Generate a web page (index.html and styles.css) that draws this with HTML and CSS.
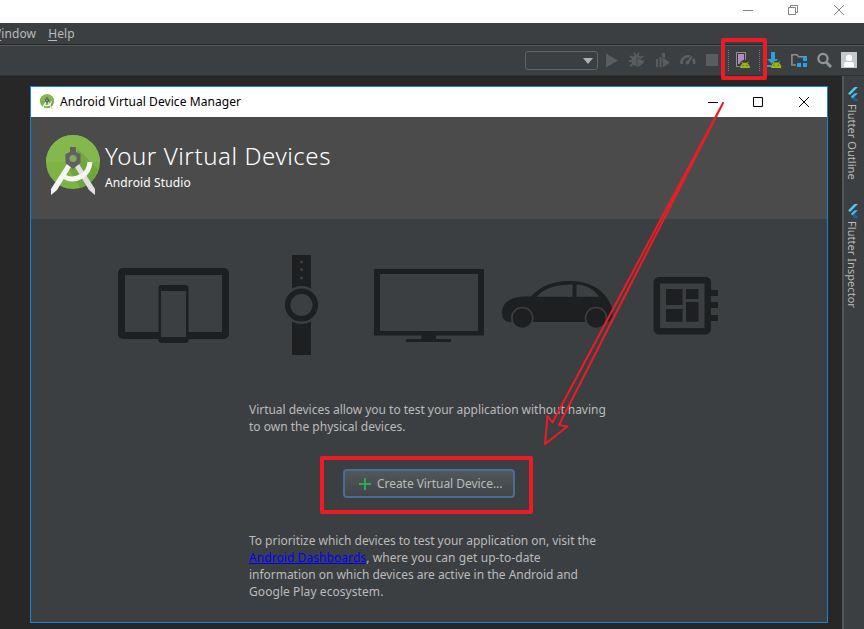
FILE: index.html
```html
<!DOCTYPE html>
<html lang="en">
<head>
<meta charset="utf-8">
<title>Android Virtual Device Manager</title>
<link rel="stylesheet" href="styles.css">
</head>
<body>
<svg class="defs" width="0" height="0">
  <symbol id="studio" viewBox="0 0 54 60">
    <circle cx="27" cy="27" r="27" fill="#7cb342"/>
    <path d="M0 27a27 27 0 0 1 54 0z" fill="#84b84e"/>
    <path d="M32 14L52 34A27 27 0 0 1 34 53L22 32z" fill="#689f38" opacity=".65"/>
    <path d="M21 29L25 32L11 55L5 60V54z" fill="#f5f5f5"/>
    <path d="M33 29L29 32L43 55L49 60V54z" fill="#e0e0e0"/>
    <path d="M17 41Q26 47 36 41Q43 37 44 27" fill="none" stroke="#f5f5f5" stroke-width="5"/>
    <path d="M24 12h6v5l4.500 2v9l-4 3l-3.500 3l-3.500-3l-4-3v-9l4.500-2z" fill="#616161"/>
    <circle cx="27" cy="23.500" r="3.600" fill="#84a95c"/>
  </symbol>
  <symbol id="droid" viewBox="0 0 10 7">
    <path d="M0 7C0 4.500 1 3 2.500 2L1.300 .5L1.900 0L3.300 1.600Q5 1 6.700 1.600L8.100 0L8.700 .5L7.500 2C9 3 10 4.500 10 7z" fill="#98b814"/>
    <path d="M2.500 3.500h1v1h-1zM6.500 3.500h1v1h-1z" fill="#3c3f41"/>
  </symbol>
  <symbol id="flutter" viewBox="0 0 12 14">
    <path d="M7.500 0H11L3 8L1 6.500z" fill="#4fc8f8"/>
    <path d="M7.500 6.200H11L7.300 9.800L11 13.500H7.500L3.800 9.800z" fill="#42b8ee"/>
    <path d="M5.500 11.600L7.300 9.800L11 13.500H7.500z" fill="#0a5a9d"/>
  </symbol>
</svg>

<div class="screen">
  <header class="titlebar">
    <svg class="caption" width="102" height="12" viewBox="0 0 102 12" fill="none" stroke="#858585">
      <path d="M0 6.500h10M45.500 3.500h7v7h-7zM47.500 3.500v-2h7v7h-2M91 1l10 10M101 1L91 11"/>
    </svg>
  </header>

  <nav class="menubar"><span class="m-window"><u>W</u>indow</span><span class="m-help"><u>H</u>elp</span></nav>

  <div class="toolbar">
    <div class="combo"><svg width="10" height="6" viewBox="0 0 10 6"><path d="M0 0h10L5 6z" fill="#afb1b3"/></svg></div>
    <svg viewBox="0 0 16 16"><path d="M2 1.500L14 8.500L2 15.500z" fill="#5a5c5d"/></svg>
    <svg viewBox="0 0 16 16" fill="#5a5c5d"><ellipse cx="7.500" cy="8.500" rx="4.800" ry="5.800"/><path d="M1 4l4 3M14 4l-4 3M0 9h5M1 14l4-3M5 1l2 3M10 1L8 4M11 9h4" stroke="#5a5c5d" stroke-width="1.800"/><path d="M8 5.500L16 10.500L8 16z" stroke="#3c3f41" stroke-width=".7"/></svg>
    <svg viewBox="0 0 16 16" fill="#5a5c5d"><path d="M1 7h2v8H1zM4.500 5h2v10h-2zM7 1h3v14H7z"/><path d="M7.500 5L15.500 10.500L7.500 16z" stroke="#3c3f41" stroke-width=".7"/></svg>
    <svg viewBox="0 0 16 16" fill="none" stroke="#5e6061" stroke-width="2.600"><path d="M1.500 12C1 6 6 3.300 10 4.500M13.300 7q1.300 2 .7 5"/><path d="M7 11.500L12 4.500" stroke-width="2"/><circle cx="7.500" cy="10.500" r=".6"/></svg>
    <svg viewBox="0 0 16 16"><path d="M2 2h12v12H2z" fill="#5a5c5d"/></svg>
    <i class="sep"></i>
    <svg viewBox="0 0 16 16"><path d="M1 0h10v15H1z" fill="#8f9193"/><path d="M2 1h8v13H2z" fill="#35383a"/><path d="M3 2h6v10H3z" fill="#b58bc7"/><path d="M4.500 16V12Q5 9 8 8h8v8z" fill="#3c3f41"/><use href="#droid" x="5" y="9.500" width="10" height="7"/></svg>
    <i class="sep"></i>
    <svg viewBox="0 0 16 16"><path d="M5 0h4v7h3L7 13L1 7h4zM0 13h8v2H0z" fill="#2d9fd9"/><path d="M5 16q0-5 4-7h7v7z" fill="#3c3f41"/><use href="#droid" x="5" y="9" width="10.500" height="7.300"/></svg>
    <svg viewBox="0 0 16 16"><path d="M5 13H.9V2.800H6l1.500 2H15V8" fill="none" stroke="#8b8e90" stroke-width="1.600"/><path d="M12 5h4v4h-4zM6 11h4v4H6zM12 11h4v4h-4z" fill="#1aa7ed"/></svg>
    <svg viewBox="0 0 16 16" fill="none" stroke="#939596"><circle cx="6" cy="6.500" r="4.600" stroke-width="2.200"/><path d="M9 10L14 15" stroke-width="3"/></svg>
    <svg viewBox="0 0 16 16"><path d="M0 0h16v16H0z" fill="#c7c8ca"/><circle cx="8" cy="6" r="3.200" fill="#fff"/><path d="M3 15v-3q0-2 2-2h6q2 0 2 2v3z" fill="#fff"/></svg>
  </div>

  <div class="workspace">
    <main class="dialog">
      <div class="dialog-title">
        <svg width="14" height="16"><use href="#studio" width="14" height="16"/></svg>
        <span class="title">Android Virtual Device Manager</span>
        <svg class="dialog-caption" width="102" height="12" viewBox="0 0 102 12" fill="none" stroke="#000"><path d="M0 6.500h10M45.500 1.500h9v9h-9zM91 1l10 10M101 1L91 11"/></svg>
      </div>
      <div class="banner">
        <svg width="54" height="60"><use href="#studio" width="54" height="60"/></svg>
        <div class="banner-text"><h1>Your Virtual Devices</h1><p>Android Studio</p></div>
      </div>
      <div class="content">
        <svg class="devices" width="600" height="100" viewBox="118 255 600 100" fill="#1e1f21">
          <rect x="118" y="268" width="111" height="71" rx="5"/>
          <path d="M125 275h97v57h-97z" fill="#3c3f41"/>
          <rect x="158.500" y="285" width="30" height="58" rx="3"/>
          <path d="M161 291h25v46h-25z" fill="#3c3f41"/>
          <path d="M292 255h19v100h-19z"/>
          <g fill="#3c3f41"><circle cx="301.500" cy="262" r="1.500"/><circle cx="301.500" cy="269.500" r="1.500"/><circle cx="301.500" cy="278" r="1.500"/><circle cx="301.500" cy="305" r="19"/></g>
          <circle cx="301.500" cy="305" r="13.800" fill="none" stroke="#1e1f21" stroke-width="5.600"/>
          <path d="M374 269h110v66.500h-48v3.500h15v3h-45v-3h15.500v-3.500H374zM380 274v57h98v-57z" fill-rule="evenodd"/>
          <path d="M502 313C502 302 511 297 524 296.500H531C541 286 552 281 570 281C592 281 607 292 612 308Q614 318 608 322H509Q502 321 502 313z"/>
          <path d="M536.500 296.700C545 288 556 284.500 572.500 284.500V296.700zM576.500 284.500C586 285 594 289 599 296.700H576.500z" fill="#3c3f41"/>
          <g stroke="#3c3f41" stroke-width="1.500"><circle cx="522.300" cy="318" r="10.500"/><circle cx="596" cy="318" r="10.500"/></g>
          <rect x="656.800" y="280.300" width="51" height="51" rx="2" fill="none" stroke="#1e1f21" stroke-width="6.500"/>
          <path d="M666 289h16.500v16H666zM686 289h12.500v10H686zM666 309h16.500v12.700H666zM686 302h12.500v19.700H686zM711 290h7v6h-7zM711 302h7v6h-7zM711 315h7v6h-7z"/>
        </svg>
        <p class="copy intro"><span class="tight">Virtual devices allow you to test your application without having</span><br><span>to own the physical devices.</span></p>
        <button class="create"><svg width="12" height="12" viewBox="0 0 12 12"><path d="M0 6h12M6 0v12" stroke="#31a852" stroke-width="2"/></svg><span>Create Virtual Device...</span></button>
        <p class="copy hint"><span class="tight">To prioritize which devices to test your application on, visit the</span><br><span class="loose"><a href="#">Android Dashboards</a>, where you can get up-to-date</span><br><span class="tight">information on which devices are active in the Android and</span><br><span class="loose">Google Play ecosystem.</span></p>
      </div>
    </main>
    <aside class="rail">
      <div class="tab outline"><svg width="12" height="14"><use href="#flutter" width="12" height="14"/></svg><span>Flutter Outline</span></div>
      <div class="tab inspector"><svg width="12" height="14"><use href="#flutter" width="12" height="14"/></svg><span>Flutter Inspector</span></div>
    </aside>
  </div>

  <svg class="annotations" width="864" height="629" viewBox="0 0 864 629" fill="none" stroke="#ed1c24" stroke-linejoin="round">
    <rect x="723" y="40" width="42" height="38" stroke-width="4"/>
    <rect x="322" y="458" width="209" height="54" stroke-width="4"/>
    <path d="M723 103L552.500 422.500L547.500 416L545 444L567.500 426.500L559 425z" stroke-width="2"/>
  </svg>
</div>
</body>
</html>
```

FILE: styles.css
```css
* { box-sizing: border-box; }
body { margin: 0; font-family: "Noto Sans", sans-serif; font-size: 12px; color: #bbb; }
h1, p { margin: 0; font-weight: 400; }
svg { display: block; flex: none; }
.defs { position: absolute; }

.screen { position: relative; width: 864px; height: 629px; overflow: hidden; display: flex; flex-direction: column; background: #272727; }
.titlebar { height: 23px; background: #fff; display: flex; justify-content: flex-end; padding: 4px 19px 0 0; flex: none; }
.menubar { height: 23px; flex: none; background: #3c3f41; border-bottom: 1px solid #565656; box-shadow: inset 0 -1px #282828; display: flex; gap: 12px; line-height: 21px; white-space: nowrap; letter-spacing: .1px; }
.m-window { margin-left: -10px; }
.menubar u { text-underline-offset: 2px; }
.toolbar { height: 30px; flex: none; background: #3c3f41; border-bottom: 1px solid #323232; display: grid; grid-template-columns: 79px 25px 26px 25px 24px 24px 7px 24px 7px 25px 26px 24px 16px; justify-content: end; align-items: start; padding: 6px 7px 0 0; }
.toolbar > svg { width: 16px; height: 16px; }
.combo { width: 73px; height: 19px; margin-top: -1px; border: 1px solid #616365; border-radius: 3px; display: flex; justify-content: flex-end; align-items: center; padding-right: 4px; }
.sep { width: 1px; height: 22px; margin-top: -2px; background: repeating-linear-gradient(#777 0 1px, transparent 1px 2px); }

.workspace { flex: 1; display: flex; min-height: 0; }
.dialog { width: 798px; height: 537px; margin: 10px 14px 0 30px; border: 1px solid #1883d7; background: #3c3f41; flex: none; }
.dialog-title { height: 30px; background: #fff; color: #000; display: flex; align-items: center; padding: 0 17px 0 9px; gap: 6px; }
.title { letter-spacing: .07px; padding-bottom: 2px; }
.dialog-caption { margin-left: auto; }
.banner { height: 102px; background: #4b4b4b; color: #fff; display: flex; padding: 18px 0 0 15px; gap: 5px; }
.banner-text { padding-top: 3px; }
.banner h1 { font-size: 24px; font-weight: 300; line-height: 36px; letter-spacing: .57px; white-space: nowrap; }
.banner p { line-height: 17px; letter-spacing: .12px; }
.content { display: flex; flex-direction: column; padding-top: 36px; }
.devices { margin-left: 87px; }
.copy { line-height: 17px; margin-left: 218px; white-space: nowrap; }
.tight { letter-spacing: -.03px; }
.loose { letter-spacing: .07px; }
.intro { margin-top: 46px; }
.create { width: 172px; height: 29px; margin: 34px 0 0 312px; border: 2px solid #4a6d96; border-radius: 4px; background: linear-gradient(#525759, #414547); color: #bbb; font: inherit; letter-spacing: -.05px; padding: 0 0 0 14px; display: flex; align-items: center; gap: 6px; white-space: nowrap; }
.hint { margin-top: 34px; }
.copy a { color: #00f; }

.rail { width: 22px; background: #3c3f41; border-left: 2px solid #555; display: flex; flex-direction: column; }
.tab { display: flex; flex-direction: column; align-items: center; gap: 3px; padding-right: 2px; }
.tab span { writing-mode: vertical-rl; line-height: 16px; font-size: 11px; letter-spacing: .05px; white-space: nowrap; margin-right: 2px; }
.outline { height: 117px; padding-top: 11px; }
.inspector { padding-top: 11px; }
.annotations { position: absolute; left: 0; top: 0; pointer-events: none; }
```
